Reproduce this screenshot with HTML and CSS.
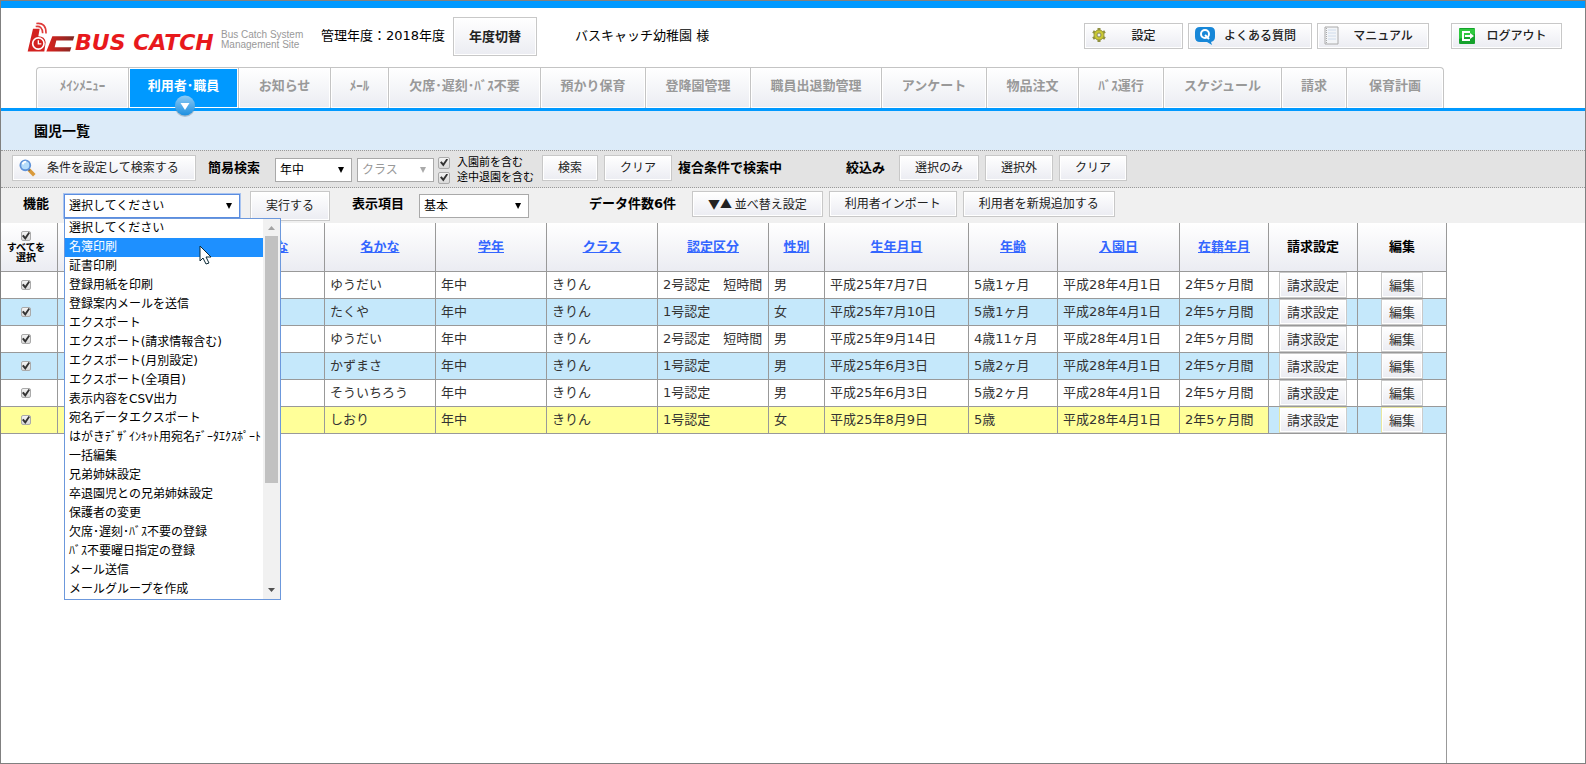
FILE: index.html
```html
<!DOCTYPE html>
<html lang="ja">
<head>
<meta charset="utf-8">
<title>園児一覧</title>
<link rel="stylesheet" href="styles.css">
</head>
<body>
<header class="header">
  <div class="logo">
    <svg class="logo-mark" viewBox="0 0 144 92" aria-hidden="true">
      <defs><linearGradient id="lc" x1="0" x2="1"><stop offset="0" stop-color="#e0201c"/><stop offset="1" stop-color="#7d2a25"/></linearGradient></defs>
      <path d="M18 20h20l-4 22q20 0 22 18l-4 28H2z" fill="#d32220"/>
      <path d="M76 42h66l-4 13H88l-5 20h50l-4 13H58z" fill="url(#lc)"/>
      <circle cx="34" cy="64" r="17" fill="#d32220" stroke="#fff" stroke-width="5"/>
      <path d="M34 54v11h9" fill="none" stroke="#fff" stroke-width="4"/>
      <path d="M26 13q20-4 21 20M28 4q30-4 29 30" fill="none" stroke="#e03a38" stroke-width="5"/>
    </svg>
    <span class="logo-name">BUS CATCH</span>
    <span class="logo-sub">Bus Catch System<br>Management Site</span>
  </div>
  <span class="year">管理年度：2018年度</span>
  <button class="btn btn-year" type="button">年度切替</button>
  <span class="school">バスキャッチ幼稚園 様</span>
  <div class="tools">
    <button class="btn tool tool-set" type="button">
      <svg class="ico" viewBox="0 0 20 20" aria-hidden="true"><g stroke="#8f9040" stroke-width="3"><path d="M8 2v14M2 5.500l12 7M2 12.500l12-7"/></g><circle cx="8" cy="9" r="5" fill="#c9c832" stroke="#99983a"/><circle cx="8" cy="9" r="2" fill="#eee" stroke="#8b8b55"/></svg>
      <span class="tool-text">設定</span></button>
    <button class="btn tool tool-faq" type="button">
      <svg class="ico" viewBox="0 0 20 20" aria-hidden="true"><path d="M5 1h10q5 0 5 5v5q0 4-4 5l1 3-5-3H5q-5 0-5-5V6q0-5 5-5z" fill="#1787d8"/><circle cx="10" cy="8" r="4" fill="none" stroke="#fff" stroke-width="2"/><path d="M10 9l4 4" stroke="#fff" stroke-width="2"/></svg>
      <span class="tool-text">よくある質問</span></button>
    <button class="btn tool tool-man" type="button">
      <svg class="ico" viewBox="0 0 20 20" aria-hidden="true"><path d="M1 1h13v17H1z" fill="#f3f5f8" stroke="#aaa"/><path d="M4 4h8M4 7h8M4 10h8M4 13h8" stroke="#cfdcec"/><path d="M2.500 2v15" stroke="#aaa" stroke-dasharray="1 1"/></svg>
      <span class="tool-text">マニュアル</span></button>
    <button class="btn tool tool-out" type="button">
      <svg class="ico" viewBox="0 0 20 20" aria-hidden="true"><rect x="1" y="2" width="16" height="16" rx="1" fill="#15a22c"/><path d="M1 3h16v5L1 13z" fill="#2fc93f"/><path d="M12 6H5v8h7" fill="none" stroke="#fff" stroke-width="2"/><path d="M7 9h5V7l4 3-4 3v-2H7z" fill="#fff"/></svg>
      <span class="tool-text">ログアウト</span></button>
  </div>
</header>
<nav class="tabs">
  <a class="tab" href="#">ﾒｲﾝﾒﾆｭｰ</a>
  <a class="tab active" href="#">利用者･職員<svg class="badge" viewBox="0 0 24 24" aria-hidden="true"><defs><linearGradient id="bg" x2="0" y2="1"><stop offset="0" stop-color="#8fcbf5"/><stop offset="1" stop-color="#1c8fe0"/></linearGradient></defs><circle cx="12" cy="13" r="10" fill="#6a7f92" opacity=".4"/><circle cx="12" cy="11.500" r="10" fill="url(#bg)"/><path d="M7.500 9h9L12 16z" fill="#fff"/></svg></a>
  <a class="tab" href="#">お知らせ</a>
  <a class="tab" href="#">ﾒｰﾙ</a>
  <a class="tab" href="#">欠席･遅刻･ﾊﾞｽ不要</a>
  <a class="tab" href="#">預かり保育</a>
  <a class="tab" href="#">登降園管理</a>
  <a class="tab" href="#">職員出退勤管理</a>
  <a class="tab" href="#">アンケート</a>
  <a class="tab" href="#">物品注文</a>
  <a class="tab" href="#">ﾊﾞｽ運行</a>
  <a class="tab" href="#">スケジュール</a>
  <a class="tab" href="#">請求</a>
  <a class="tab" href="#">保育計画</a>
</nav>
<h1 class="title">園児一覧</h1>
<form class="bar search">
  <button class="btn btn-cond" type="button">
    <svg class="lens" viewBox="0 0 20 20" aria-hidden="true"><path d="M11 12l6 6" stroke="#d99a3c" stroke-width="4"/><path d="M10 11l2 2" stroke="#666" stroke-width="2"/><circle cx="7" cy="7" r="5.500" fill="#b5dcfb" stroke="#5f92d8" stroke-width="2"/><path d="M4 6q1-3 4-3" stroke="#fff" stroke-width="2" fill="none"/></svg>
    条件を設定して検索する</button>
  <label class="label push-xs" for="grade">簡易検索</label>
  <span class="pick pick-sm push-sm"><select id="grade"><option>年中</option></select></span>
  <span class="pick pick-sm off"><select aria-label="クラス" disabled><option>クラス</option></select></span>
  <span class="checks">
    <label class="check-line"><input class="check" type="checkbox" checked>入園前を含む</label>
    <label class="check-line"><input class="check" type="checkbox" checked>途中退園を含む</label>
  </span>
  <button class="btn" type="button">検索</button>
  <button class="btn" type="button">クリア</button>
  <span class="label">複合条件で検索中</span>
  <span class="label push-xl">絞込み</span>
  <button class="btn push-sm" type="button">選択のみ</button>
  <button class="btn" type="button">選択外</button>
  <button class="btn" type="button">クリア</button>
</form>
<form class="bar actions">
  <label class="label" for="func">機能</label>
  <span class="pick pick-lg open push-sm"><select id="func"><option>選択してください</option></select>
    <span class="menu">
      <ul class="items" role="listbox" aria-label="機能">
        <li>選択してください</li>
        <li class="on">名簿印刷</li>
        <li>証書印刷</li>
        <li>登録用紙を印刷</li>
        <li>登録案内メールを送信</li>
        <li>エクスポート</li>
        <li>エクスポート(請求情報含む)</li>
        <li>エクスポート(月別設定)</li>
        <li>エクスポート(全項目)</li>
        <li>表示内容をCSV出力</li>
        <li>宛名データエクスポート</li>
        <li>はがきﾃﾞｻﾞｲﾝｷｯﾄ用宛名ﾃﾞｰﾀｴｸｽﾎﾟｰﾄ</li>
        <li>一括編集</li>
        <li>兄弟姉妹設定</li>
        <li>卒退園児との兄弟姉妹設定</li>
        <li>保護者の変更</li>
        <li>欠席･遅刻･ﾊﾞｽ不要の登録</li>
        <li>ﾊﾞｽ不要曜日指定の登録</li>
        <li>メール送信</li>
        <li>メールグループを作成</li>
      </ul>
      <span class="scroll"><i class="up"></i><i class="thumb"></i><i class="down"></i></span>
      <svg class="cursor" viewBox="0 0 13 20" aria-hidden="true"><path d="M1 1v15l3-3 3 6 3-1-3-6h5z" fill="#fff" stroke="#0c2a36"/></svg>
    </span>
  </span>
  <button class="btn btn-run" type="button">実行する</button>
  <label class="label push-md" for="cols">表示項目</label>
  <span class="pick pick-md push-sm"><select id="cols"><option>基本</option></select></span>
  <span class="label push-lg">データ件数6件</span>
  <button class="btn btn-sort" type="button">▼▲ 並べ替え設定</button>
  <button class="btn" type="button">利用者インポート</button>
  <button class="btn" type="button">利用者を新規追加する</button>
</form>
<main class="list">
<table>
  <colgroup><col class="c-check"><col class="c-name"><col class="c-std"><col class="c-std"><col class="c-std"><col class="c-std"><col class="c-std"><col class="c-sex"><col class="c-birth"><col class="c-age"><col class="c-in"><col class="c-age"><col class="c-age"><col class="c-last"></colgroup>
  <thead><tr>
    <th class="all"><label><input class="check small" type="checkbox" checked><br>すべてを<br>選択</label></th>
    <th></th><th><a href="#">姓かな</a></th><th><a href="#">名かな</a></th><th><a href="#">学年</a></th><th><a href="#">クラス</a></th><th><a href="#">認定区分</a></th><th><a href="#">性別</a></th><th><a href="#">生年月日</a></th><th><a href="#">年齢</a></th><th><a href="#">入園日</a></th><th><a href="#">在籍年月</a></th><th>請求設定</th><th>編集</th>
  </tr></thead>
  <tbody>
    <tr><td class="mid"><input class="check small" type="checkbox" aria-label="選択" checked></td><td></td><td></td><td>ゆうだい</td><td>年中</td><td>きりん</td><td>2号認定　短時間</td><td>男</td><td>平成25年7月7日</td><td>5歳1ヶ月</td><td>平成28年4月1日</td><td>2年5ヶ月間</td><td class="mid"><button class="btn cell" type="button">請求設定</button></td><td class="mid"><button class="btn cell" type="button">編集</button></td></tr>
    <tr class="alt"><td class="mid"><input class="check small" type="checkbox" aria-label="選択" checked></td><td></td><td></td><td>たくや</td><td>年中</td><td>きりん</td><td>1号認定</td><td>女</td><td>平成25年7月10日</td><td>5歳1ヶ月</td><td>平成28年4月1日</td><td>2年5ヶ月間</td><td class="mid"><button class="btn cell" type="button">請求設定</button></td><td class="mid"><button class="btn cell" type="button">編集</button></td></tr>
    <tr><td class="mid"><input class="check small" type="checkbox" aria-label="選択" checked></td><td></td><td></td><td>ゆうだい</td><td>年中</td><td>きりん</td><td>2号認定　短時間</td><td>男</td><td>平成25年9月14日</td><td>4歳11ヶ月</td><td>平成28年4月1日</td><td>2年5ヶ月間</td><td class="mid"><button class="btn cell" type="button">請求設定</button></td><td class="mid"><button class="btn cell" type="button">編集</button></td></tr>
    <tr class="alt"><td class="mid"><input class="check small" type="checkbox" aria-label="選択" checked></td><td></td><td></td><td>かずまさ</td><td>年中</td><td>きりん</td><td>1号認定</td><td>男</td><td>平成25年6月3日</td><td>5歳2ヶ月</td><td>平成28年4月1日</td><td>2年5ヶ月間</td><td class="mid"><button class="btn cell" type="button">請求設定</button></td><td class="mid"><button class="btn cell" type="button">編集</button></td></tr>
    <tr><td class="mid"><input class="check small" type="checkbox" aria-label="選択" checked></td><td></td><td></td><td>そういちろう</td><td>年中</td><td>きりん</td><td>1号認定</td><td>男</td><td>平成25年6月3日</td><td>5歳2ヶ月</td><td>平成28年4月1日</td><td>2年5ヶ月間</td><td class="mid"><button class="btn cell" type="button">請求設定</button></td><td class="mid"><button class="btn cell" type="button">編集</button></td></tr>
    <tr class="alt hover"><td class="mid"><input class="check small" type="checkbox" aria-label="選択" checked></td><td></td><td></td><td>しおり</td><td>年中</td><td>きりん</td><td>1号認定</td><td>女</td><td>平成25年8月9日</td><td>5歳</td><td>平成28年4月1日</td><td>2年5ヶ月間</td><td class="mid plain"><button class="btn cell" type="button">請求設定</button></td><td class="mid plain"><button class="btn cell" type="button">編集</button></td></tr>
  </tbody>
</table>
</main>
</body>
</html>
```
FILE: styles.css
```css
* { box-sizing: border-box; }
body {
  margin: 0;
  min-height: 100vh;
  display: flex;
  flex-direction: column;
  border: 1px solid #808080;
  background: #fff;
  color: #000;
  font: 13px/20px "DejaVu Sans", "Noto Sans CJK JP", sans-serif;
}
button, select, input { font: inherit; margin: 0; }

/* header */
.header {
  display: flex;
  align-items: flex-start;
  height: 66px;
  padding: 8px 23px 0 26px;
  border-top: 7px solid #0099ff;
  white-space: nowrap;
}
.logo { display: flex; width: 294px; padding-top: 6px; }
.logo-mark { flex: none; width: 48px; height: 31px; }
.logo-name {
  width: 146px;
  padding-top: 10px;
  color: #e8191c;
  font: italic bold 22px/22px "DejaVu Sans", sans-serif;
}
.logo-sub { padding: 8px 0 0; color: #999; font: 10px/10px "DejaVu Sans", sans-serif; font-family: "Liberation Sans", Arial, sans-serif; }
.year { padding-top: 10px; }
.school { margin-left: 38px; padding-top: 10px; }
.tools { display: flex; gap: 5px; margin-left: auto; padding-top: 7px; }

.btn {
  height: 26px;
  padding: 0 15px;
  border: 1px solid #c8c8c8;
  background: linear-gradient(#fff, #ebecf2);
  box-shadow: inset 0 0 0 1px #fff;
  color: #222;
  font-size: 12px;
  line-height: 24px;
  white-space: nowrap;
}
.btn-year { height: 39px; width: 84px; margin: 1px 0 0 8px; padding: 0; font-size: 13px; font-weight: bold; }
.tool { display: flex; align-items: center; padding: 0 6px; }
.tool-text { flex: 1; text-align: center; font-weight: 500; }
.tool-set { width: 99px; }
.tool-faq { width: 124px; }
.tool-man { width: 112px; }
.tool-out { width: 111px; margin-left: 17px; }
.ico { width: 20px; height: 20px; }

/* tabs */
.tabs {
  display: grid;
  grid-template-columns: 92px 110px 92px 58px 152px 105px 105px 131px 105px 92px 85px 118px 65px 98px;
  height: 44px;
  padding-left: 35px;
  border-bottom: 3px solid #0099ff;
}
.tab {
  position: relative;
  border-top: 1px solid #c4c4c4;
  border-left: 1px solid #c4c4c4;
  background: linear-gradient(#fff, #ebecf2);
  box-shadow: inset 0 0 0 1px #fff;
  color: #999;
  font-weight: bold;
  line-height: 35px;
  text-align: center;
  text-decoration: none;
  white-space: nowrap;
}
.tab:first-child { border-top-left-radius: 4px; }
.tab:last-child { border-right: 1px solid #c4c4c4; border-top-right-radius: 4px; }
.tab.active { background: #0099ff; color: #fff; }
.badge { position: absolute; left: 44px; bottom: -10px; width: 24px; height: 24px; z-index: 1; }

.title {
  margin: 0;
  padding: 2px 33px 0;
  background: #dcebf9;
  font-size: 14px;
  font-weight: bold;
  line-height: 37px;
}

/* tool bars */
.bar { display: flex; align-items: flex-start; gap: 6px; white-space: nowrap; }
.search {
  height: 38px;
  padding: 4px 11px 0;
  border-top: 1px dotted #999;
  border-bottom: 1px dotted #999;
  background: #e3e3e3;
}
.actions { height: 35px; padding: 3px 22px 0; background: #f0f0f0; }
.label { font-weight: bold; line-height: 26px; }
.push-xs { margin-left: 6px; }
.push-sm { margin-left: 8px; }
.push-md { margin-left: 16px; }
.push-lg { margin-left: 54px; }
.push-xl { margin-left: 58px; }
.btn-cond { display: flex; align-items: center; gap: 10px; width: 184px; padding: 0 6px; }
.lens { width: 18px; height: 18px; }
.btn-run { height: 30px; margin-left: 4px; }
.btn-sort { margin-left: 10px; font-family: "Noto Sans CJK JP", sans-serif; }

.pick { position: relative; margin-top: 3px; }
.pick.push-sm { margin-left: 9px; }
.pick select {
  appearance: none;
  display: block;
  width: 100%;
  height: 24px;
  padding: 0 4px;
  border: 1px solid #a9a9a9;
  border-radius: 0;
  background: #fff;
  color: #000;
  font-size: 12px;
  opacity: 1;
}
.pick::after {
  content: "";
  position: absolute;
  top: 9px;
  right: 8px;
  width: 6px;
  height: 6px;
  background: #000;
  clip-path: polygon(0 0, 100% 0, 50% 100%);
}
.pick.off select { color: #999; }
.pick.off::after { background: #aaa; }
.pick-sm { width: 77px; }
.pick-sm.off { margin-left: -1px; }
.pick-md { width: 110px; }
.pick-lg { width: 176px; }
.pick.open select { border-color: #5b8de0; box-shadow: 0 0 0 1px #a9c4f0; outline: 0; }

.checks { display: flex; flex-direction: column; width: 98px; margin-left: -2px; }
.check-line { display: flex; align-items: center; gap: 7px; height: 15px; font-size: 11px; line-height: 15px; }
.check {
  appearance: none;
  flex: none;
  position: relative;
  width: 12px;
  height: 12px;
  border: 1px solid #aaa;
  border-radius: 2px;
  background: linear-gradient(#f3f3f3, #d9d9d9);
}
.check:checked::before {
  content: "";
  position: absolute;
  inset: 1px;
  background: #333;
  clip-path: polygon(0 50%, 20% 35%, 40% 58%, 82% 0, 100% 14%, 42% 100%);
}
.check.small { width: 10px; height: 10px; }
.check.small:checked::before { inset: 0; }

/* open list */
.menu {
  position: absolute;
  top: 24px;
  left: 0;
  z-index: 5;
  display: flex;
  width: 217px;
  border: 1px solid #6c98dc;
  background: #fff;
  font-size: 12px;
}
.items { flex: 1; margin: 0; padding: 0; list-style: none; }
.items li { height: 19px; padding-left: 4px; line-height: 19px; }
.items .on { background: #1e90ff; color: #fff; }
.scroll {
  display: flex;
  flex-direction: column;
  align-items: center;
  width: 17px;
  padding: 7px 0;
  background: #f1f1f1;
}
.up, .down { width: 7px; height: 4px; background: #a3a3a3; clip-path: polygon(50% 0, 100% 100%, 0 100%); }
.down { margin-top: auto; background: #505050; clip-path: polygon(0 0, 100% 0, 50% 100%); }
.thumb { width: 13px; height: 247px; margin-top: 6px; background: #c1c1c1; }
.cursor { position: absolute; left: 134px; top: 26px; width: 13px; height: 20px; }

/* list */
.list { flex: 1; align-self: flex-start; border-right: 1px solid #999; }
table { table-layout: fixed; width: 1445px; border-spacing: 0; }
.c-check { width: 57px; }
.c-name { width: 156px; }
.c-std { width: 111px; }
.c-sex { width: 56px; }
.c-birth { width: 144px; }
.c-age { width: 89px; }
.c-in { width: 122px; }
.c-last { width: 88px; }
th, td { border-right: 1px solid #999; border-bottom: 1px solid #999; white-space: nowrap; }
th:last-child, td:last-child { border-right: 0; }
th { height: 49px; padding: 0; background: linear-gradient(#fff, #ebecf2); }
th a { color: #3366ff; }
th.all { padding-right: 6px; font-size: 10px; line-height: 10px; }
td { height: 27px; padding: 0 0 1px 5px; color: #333; line-height: 24px; }
td.mid { padding: 0; text-align: center; line-height: 0; }
td.mid:first-child { padding-right: 6px; }
.alt td { background: #c5e8fb; }
.hover td { background: #ffff99; }
.hover td.plain { background: #c5e8fb; }
.cell { padding: 2px 7px 0; color: #333; font-size: 13px; line-height: 22px; }
.hover .cell { border-color: #e8e6a0 #ccc #ccc #e8e6a0; }
```
